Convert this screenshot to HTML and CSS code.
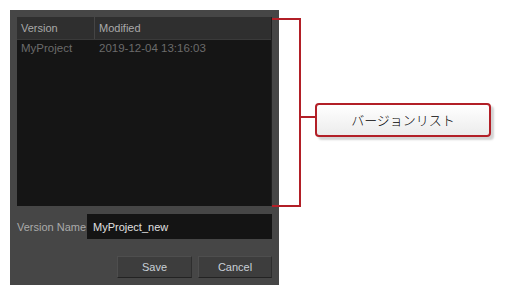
FILE: index.html
```html
<!DOCTYPE html>
<html lang="ja">
<head>
    <meta charset="UTF-8">
    <meta name="viewport" content="width=device-width, initial-scale=1.0">
    <title>Save Version</title>
    <link rel="stylesheet" href="styles.css">
</head>
<body>
    <div class="stage">
        <div class="dialog">
            <div class="version-list">
                <div class="list-header">
                    <div class="col col-version">Version</div>
                    <div class="col col-modified">Modified</div>
                </div>
                <div class="list-row">
                    <div class="col col-version">MyProject</div>
                    <div class="col col-modified">2019-12-04 13:16:03</div>
                </div>
            </div>
            <div class="name-row">
                <label class="name-label" for="version-name">Version Name</label>
                <input class="name-input" id="version-name" type="text" value="MyProject_new">
            </div>
            <div class="button-row">
                <button class="dlg-button save">Save</button>
                <button class="dlg-button cancel">Cancel</button>
            </div>
        </div>

        <!-- annotation callout -->
        <div class="bracket"></div>
        <div class="bracket-stub"></div>
        <div class="callout">バージョンリスト</div>
    </div>
</body>
</html>
```

FILE: styles.css
```css
body {
    margin: 0;
    background-color: #ffffff;
    font-family: "Liberation Sans", Arial, sans-serif;
    font-size: 11px;
}
.stage {
    position: relative;
    width: 506px;
    height: 296px;
    padding: 10px;
    box-sizing: border-box;
}
.dialog {
    width: 269px;
    height: 275px;
    padding: 7px;
    box-sizing: border-box;
    background-color: #464646;
    display: flex;
    flex-direction: column;
}
.version-list {
    height: 190px;
    background-color: #151515;
    border-right: 1px solid #1f1f1f;
    box-sizing: border-box;
}
.list-header {
    display: flex;
    height: 23px;
    background-color: #2f2f2f;
    border-bottom: 1px solid #3a3a3a;
    box-sizing: border-box;
    color: #a9a9a9;
}
.list-header .col {
    line-height: 22px;
}
.list-header .col-version {
    border-right: 1px solid #454545;
}
.col {
    padding-left: 4px;
    box-sizing: border-box;
}
.col-version {
    width: 78px;
}
.col-modified {
    flex: 1;
}
.list-row {
    display: flex;
    height: 17px;
    line-height: 17px;
    color: #6b6b6b;
    font-size: 11.5px;
}
.name-row {
    display: flex;
    align-items: center;
    margin-top: 8px;
    height: 25px;
}
.name-label {
    width: 70px;
    color: #aaaaaa;
}
.name-input {
    flex: 1;
    height: 25px;
    box-sizing: border-box;
    border: none;
    background-color: #141414;
    color: #e0e0e0;
    font-family: "Liberation Sans", Arial, sans-serif;
    font-size: 11px;
    padding: 0 6px;
    outline: none;
}
.button-row {
    display: flex;
    justify-content: flex-end;
    gap: 6px;
    margin-top: 17px;
}
.dlg-button {
    height: 22px;
    background-color: #3d3d3d;
    border: 1px solid #4e4e4e;
    border-bottom-color: #232323;
    border-right-color: #2e2e2e;
    color: #c9d0d8;
    font-family: "Liberation Sans", Arial, sans-serif;
    font-size: 11px;
    padding: 0;
    cursor: pointer;
}
.save {
    width: 75px;
}
.cancel {
    width: 74px;
}
.bracket {
    position: absolute;
    left: 272px;
    top: 18px;
    width: 29px;
    height: 189px;
    border: 2px solid #b21f27;
    border-left: none;
    box-sizing: border-box;
}
.bracket-stub {
    position: absolute;
    left: 300px;
    top: 116px;
    width: 16px;
    height: 2px;
    background-color: #b21f27;
}
.callout {
    position: absolute;
    left: 315px;
    top: 103px;
    width: 176px;
    height: 34px;
    box-sizing: border-box;
    border: 2px solid #b21f27;
    border-radius: 4px;
    background: linear-gradient(#ffffff, #ececec);
    box-shadow: 3px 3px 2px #d4d4d4;
    color: #000000;
    font-family: "Noto Sans CJK JP", sans-serif;
    font-size: 13px;
    font-weight: 300;
    text-align: center;
    line-height: 30px;
}
```
